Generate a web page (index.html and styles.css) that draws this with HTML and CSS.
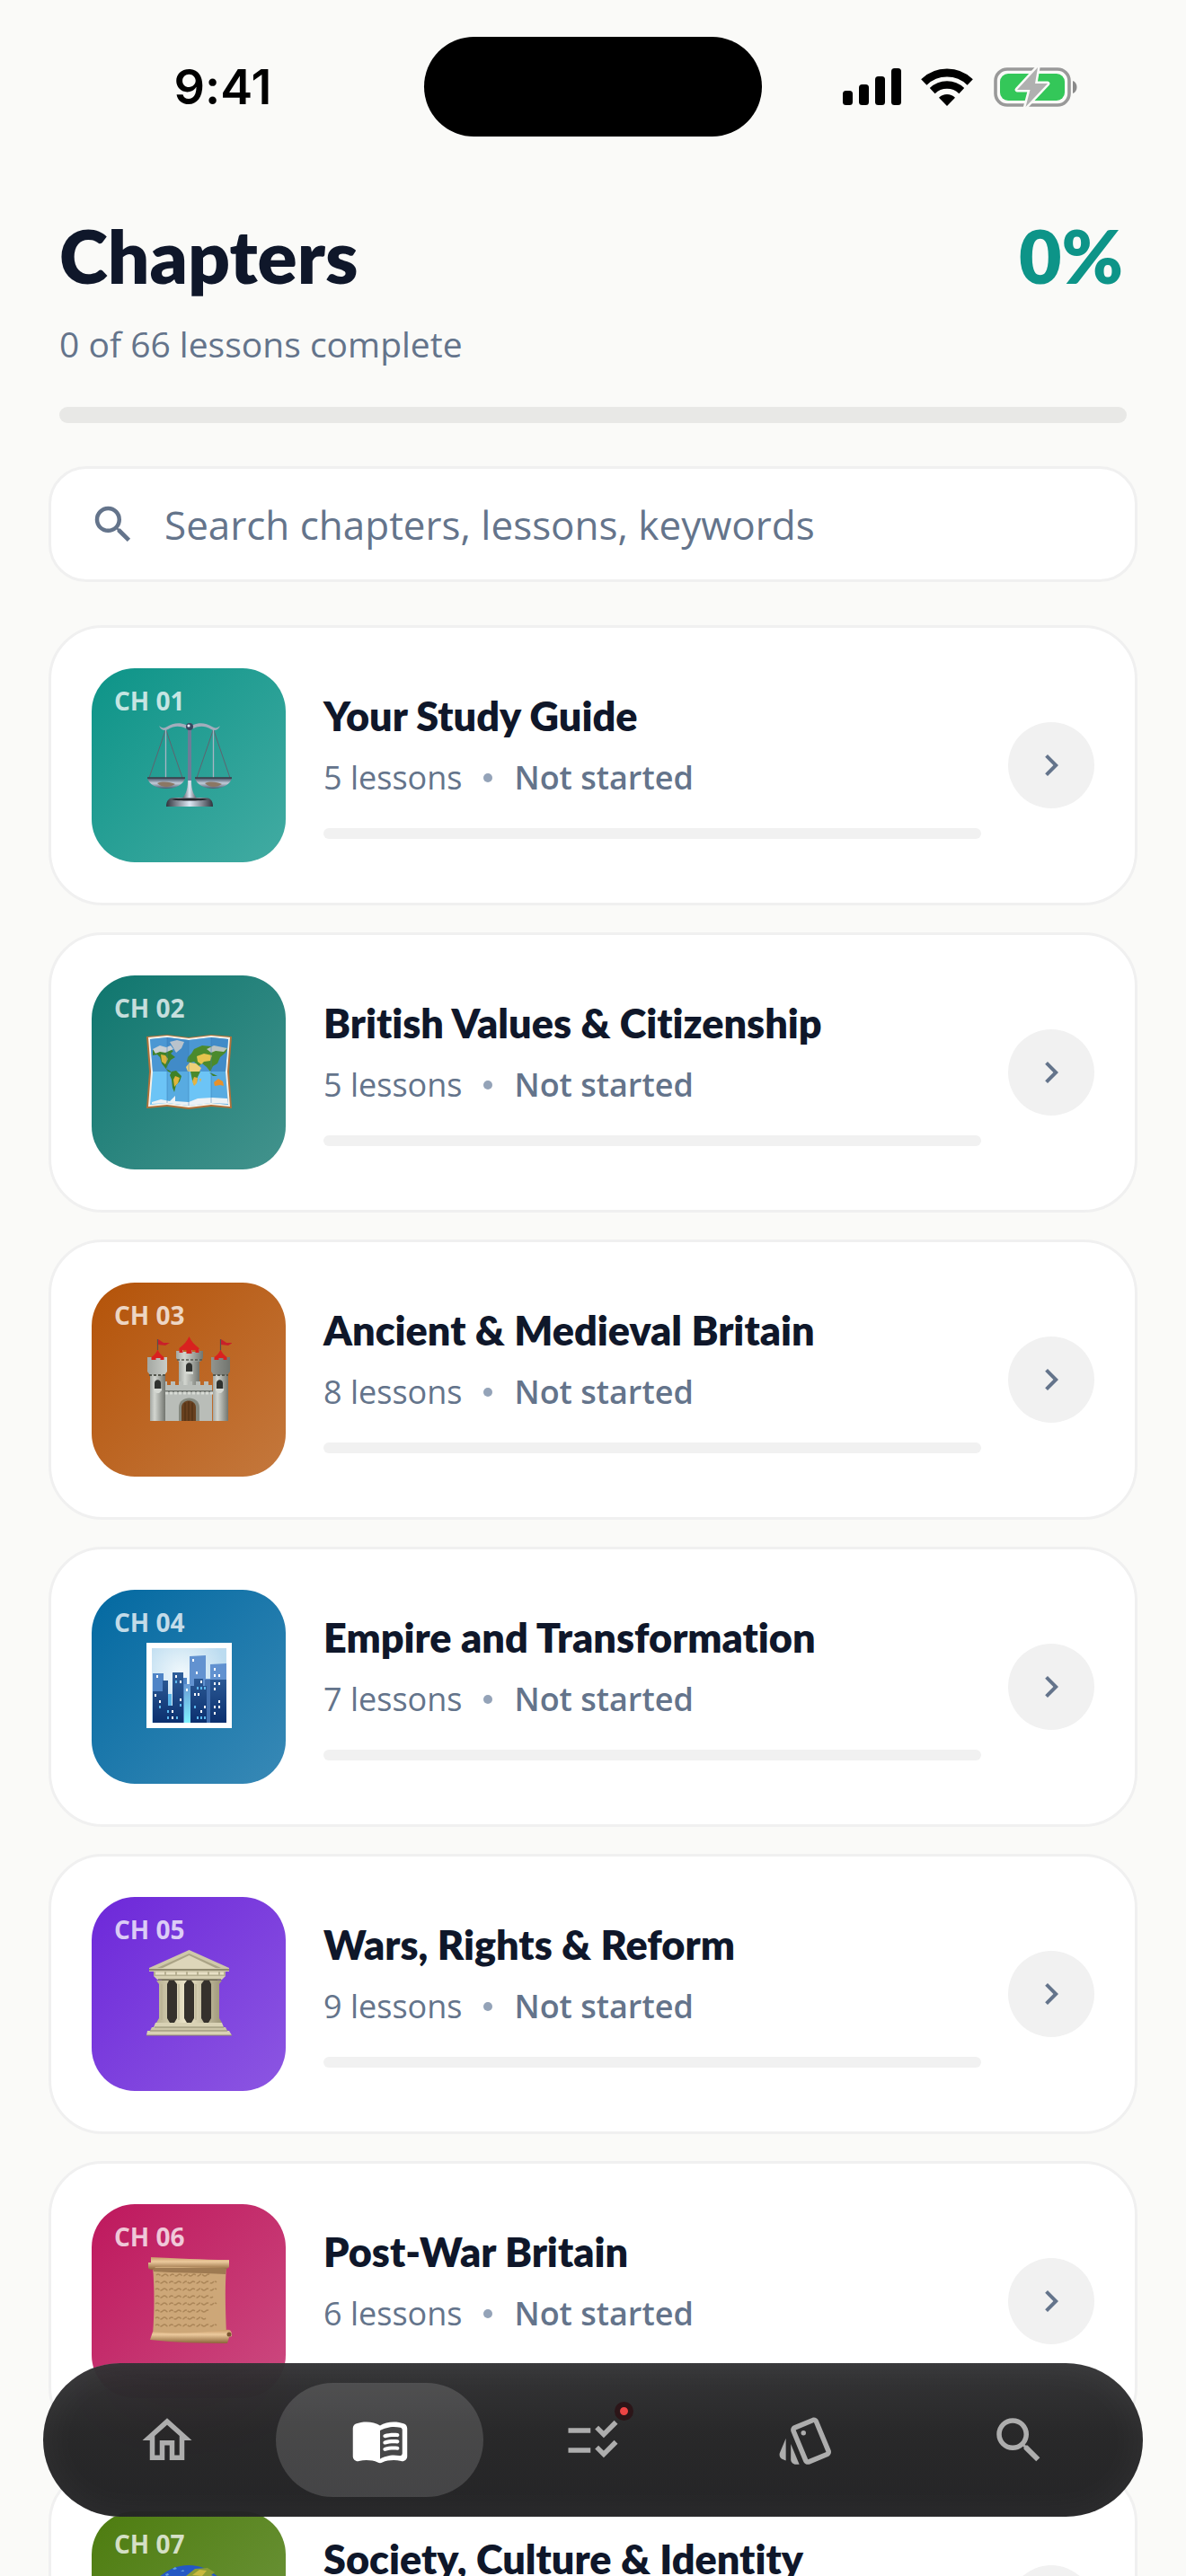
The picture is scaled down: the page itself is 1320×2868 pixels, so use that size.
FILE: index.html
```html
<!DOCTYPE html>
<html lang="en">
<head>
    <meta charset="UTF-8">
    <meta name="viewport" content="width=device-width, initial-scale=1.0">
    <title>Chapters</title>
    <link rel="stylesheet" href="styles.css">
</head>
<body>
    <div class="screen">
        <div class="status-bar">
            <span class="time">9:41</span>
            <span class="island"></span>
            <div class="status-icons">
                <svg width="65" height="42" viewBox="0 0 65 42">
                    <rect x="0" y="25" width="11" height="16" rx="3.5"/>
                    <rect x="18" y="18" width="11" height="23" rx="3.5"/>
                    <rect x="36" y="9" width="11" height="32" rx="3.5"/>
                    <rect x="54" y="0" width="11" height="41" rx="3.5"/>
                </svg>
                <svg width="58" height="44" viewBox="0 0 58 44">
                    <path d="M3.3 16.4a37 37 0 0 1 51.4 0" fill="none" stroke="#000" stroke-width="9"/>
                    <path d="M12.7 26.1a23.5 23.5 0 0 1 32.6 0" fill="none" stroke="#000" stroke-width="8.4"/>
                    <path d="M29 43l-9-9.3a13 13 0 0 1 18 0z"/>
                </svg>
                <svg width="95" height="50" viewBox="0 0 95 50">
                    <rect x="3" y="5" width="82" height="40" rx="13" fill="none" stroke="#999" stroke-width="3.6"/>
                    <path d="M89 18c6 2 6 12 0 14z" fill="#8a8a8a"/>
                    <rect x="8" y="10" width="72" height="30" rx="9" fill="#34c759"/>
                    <path d="M50 3L27 28h14.5l-5 19L61 21H47z" fill="#b0b0b0" stroke="#fafaf8" stroke-width="5" stroke-linejoin="round" paint-order="stroke"/>
                </svg>
            </div>
        </div>

        <header class="header">
            <div class="header-row">
                <h1>Chapters</h1>
                <span class="percent">0%</span>
            </div>
            <p class="subtitle">0 of 66 lessons complete</p>
            <div class="total-bar"></div>
        </header>

        <main class="content">
            <label class="search" for="search">
                <svg width="54" height="54" viewBox="0 0 24 24"><path d="M15.5 14h-.79l-.28-.27A6.471 6.471 0 0 0 16 9.5 6.5 6.5 0 1 0 9.5 16c1.61 0 3.09-.59 4.23-1.57l.27.28v.79l5 4.99L20.49 19l-4.99-5zm-6 0C7.01 14 5 11.99 5 9.5S7.01 5 9.5 5 14 7.01 14 9.5 11.99 14 9.5 14z"/></svg>
                <input type="text" id="search" placeholder="Search chapters, lessons, keywords" aria-label="Search">
            </label>

            <a class="card" href="#">
                <div class="tile tile-1">
                    <span class="tile-label">CH 01</span>
                    <!-- scales -->
                    <svg class="emoji" viewBox="0 0 96 96">
                        <defs>
                            <linearGradient id="steel" x1="0" x2="1">
                                <stop offset="0" stop-color="#30343d"/><stop offset=".5" stop-color="#dfe9f5"/><stop offset="1" stop-color="#30343d"/>
                            </linearGradient>
                            <linearGradient id="pan" x1="0" x2="0" y1="0" y2="1">
                                <stop offset="0" stop-color="#3e4c60"/><stop offset=".5" stop-color="#c2cdda"/><stop offset="1" stop-color="#4a586d"/>
                            </linearGradient>
                        </defs>
                        <path d="M22.5 9L4 63M22.5 9L41 63M75.5 9L57 63M75.5 9L94 63" stroke="#5d6470" stroke-width="1" fill="none"/>
                        <path d="M22.5 9v54M75.5 9v54" stroke="#a9b4c4" stroke-width="1.3"/>
                        <path d="M15 5c3 3 6 3 9 1 6-4 14-5 21-2h8c7-3 15-2 21 2 3 2 6 2 9-1-2 5-6 6-10 4-7-4-13-4-20-1h-8c-7-3-13-3-20 1-4 2-8 1-10-4z" fill="#a3adbc"/>
                        <rect x="47" y="7" width="4" height="74" fill="#6d7c98"/>
                        <circle cx="49" cy="6" r="4" fill="#39475f"/><circle cx="48" cy="5" r="1.6" fill="#e8f1ff"/>
                        <path d="M47 66h4c0 12 3 17 8 21H39c5-4 8-9 8-21z" fill="url(#steel)"/>
                        <path d="M23 95c0-7 3-10 10-10h32c7 0 10 3 10 10z" fill="url(#steel)"/>
                        <path d="M28 87c8-2 33-2 42 0-8 2-34 2-42 0z" fill="#25282e"/>
                        <path d="M2 63h42c-3 16-39 16-42 0zM55 63h41c-3 16-38 16-41 0z" fill="url(#pan)"/>
                        <path d="M2 63h42M55 63h41" stroke="#3b3f49" stroke-width="1.5"/>
                        <path d="M13 69c7-3 15-1 20 1-6 4-15 4-20-1zM66 69c7-3 14-1 19 1-6 4-14 4-19-1z" fill="#8b7764"/>
                    </svg>
                </div>
                <div class="card-text">
                    <h2>Your Study Guide</h2>
                    <p class="meta">5 lessons <i class="dot"></i> <b>Not started</b></p>
                    <div class="bar"></div>
                </div>
                <span class="arrow"><svg width="48" height="48" viewBox="0 0 24 24"><path d="M10 6L8.59 7.41 13.17 12l-4.58 4.59L10 18l6-6z"/></svg></span>
            </a>

            <a class="card" href="#">
                <div class="tile tile-2">
                    <span class="tile-label">CH 02</span>
                    <!-- world map -->
                    <svg class="emoji" viewBox="0 0 96 96">
                        <path d="M1 9l23-2 24 3 25-3 23 2-3 39 3 41-23-2-25 3-24-3-23 2 3-41z" fill="#b0713a"/>
                        <path d="M3 10l21-2 24 3 25-3 21 2-3 38 3 39-21-2-25 3-24-3-21 2 3-39z" fill="#f5f2ea"/>
                        <path d="M5 12l19-2 24 3 25-3 19 2-3 36 3 37-19-2-25 3-24-3-19 2 3-37z" fill="#6cc4f6"/>
                        <path d="M5 12l19-2 24 3 25-3 19 2-3 36H8z" fill="#4b97d3"/>
                        <path d="M24 10l24 3v73l-24-3zM73 10l19 2-3 36 3 37-19-2z" fill="#2a6fae" opacity=".3"/>
                        <path d="M8 24l10-2 8 1 5 2-3 3 5 4-5 3-3 5-2 5 4 2 3 3-5-2-7-9-2-7-3-3-5 1z" fill="#3f8128"/>
                        <path d="M17 29l5 1 3 4-3 6-4-3z" fill="#d8b33c"/>
                        <path d="M8 23l8-4 7 2 5-2 3 4-9 4-6-1-5 2z" fill="#c7cfd4"/>
                        <path d="M27 15l8-2 8 2-3 7-6 5-4-7z" fill="#b9c3cc"/>
                        <path d="M29 48l5-1 6 6-2 6-4 4-2 8-2-5-1-9-2-5z" fill="#3f8128"/>
                        <path d="M33 53l5 2-2 6-4 4-1-8z" fill="#e0b53c"/>
                        <path d="M47 32l4-4 3-5 9-4 10 1 18 2-2 5-6 5-3 7-5 3-3 6-4-5-5-4-4 3-5-5-4 1-4-1z" fill="#4b8a2c"/>
                        <path d="M57 31l8-3 9 2-2 6-7 1-3 3-4-3z" fill="#e5c44d"/>
                        <path d="M68 23l8-4 15 3-4 4-9-1-5 2z" fill="#bbc3c2"/>
                        <path d="M45 43l4-5 7 1 6 5-2 4h-13z" fill="#efd079"/>
                        <path d="M50 48h11l-3 6-1 6-3 3-2-5z" fill="#4b8a2c"/>
                        <path d="M54 54l4 1-1 6-3 3-2-5zM60 56h2l-1 4z" fill="#e2b344"/>
                        <path d="M76 60l5-4 5 3 1 5-4-1-6 1z" fill="#e8912a"/>
                        <path d="M71 49l5 2 4 2-5 0z" fill="#3f8128"/>
                        <path d="M7 82l10-3 10 2 6-6v6l15 1 10-4 16-1 17 1 1 6-19-1-25 3-24-3-17 1z" fill="#edf2f5"/>
                        <path d="M48 13v73M24 10v73M73 10v73" stroke="#3c7db5" stroke-width="1" opacity=".5"/>
                    </svg>
                </div>
                <div class="card-text">
                    <h2>British Values &amp; Citizenship</h2>
                    <p class="meta">5 lessons <i class="dot"></i> <b>Not started</b></p>
                    <div class="bar"></div>
                </div>
                <span class="arrow"><svg width="48" height="48" viewBox="0 0 24 24"><path d="M10 6L8.59 7.41 13.17 12l-4.58 4.59L10 18l6-6z"/></svg></span>
            </a>

            <a class="card" href="#">
                <div class="tile tile-3">
                    <span class="tile-label">CH 03</span>
                    <!-- castle -->
                    <svg class="emoji" viewBox="0 0 96 96">
                        <defs>
                            <linearGradient id="stone" x1="0" x2="1">
                                <stop offset="0" stop-color="#a3a7a2"/><stop offset=".3" stop-color="#d3d6d0"/><stop offset="1" stop-color="#72756f"/>
                            </linearGradient>
                        </defs>
                        <rect x="37" y="24" width="23" height="32" fill="url(#stone)"/>
                        <path d="M34 17h4v-2h4v3h4v-3h6v3h4v-3h4v2h4v8l-3 4H37l-3-4z" fill="url(#stone)"/>
                        <path d="M48.5 1c2 5 6 9 11 13v5h-4v-3h-4v4h-6v-4h-4v3h-4v-5c5-4 9-8 11-13z" fill="#d9211f"/>
                        <path d="M35 27h28" stroke="#55584f" stroke-width="1.5" stroke-dasharray="3 2"/>
                        <path d="M45 40v-6c0-5 7-5 7 0v6z" fill="#30322f"/><rect x="44" y="40" width="9" height="3" fill="#d5d8d2"/>
                        <path d="M21 51h3v4h4v-4h5v4h4v-4h5v4h5v-4h5v4h4v-4h5v4h4v-4h5v4h4v40H21z" fill="#b9bdb8"/>
                        <path d="M22 62h53" stroke="#5d605a" stroke-width="1.5"/><path d="M22 64h53" stroke="#d8dbd5" stroke-width="3" stroke-dasharray="3 2"/>
                        <path d="M37 95V80c0-14 23-14 23 0v15z" fill="#85897f"/>
                        <path d="M40 95V80c0-10 16-10 16 0v15z" fill="#68401f"/>
                        <path d="M44 75v20M48 73v22M52 75v20" stroke="#4b2c13" stroke-width="1"/>
                        <rect x="5" y="40" width="17" height="55" fill="url(#stone)"/>
                        <rect x="75" y="40" width="17" height="55" fill="url(#stone)"/>
                        <path d="M2 24h22v16l-3 4H5l-3-4zM73 24h21v16l-3 4H76l-3-4z" fill="url(#stone)"/>
                        <path d="M4 44h18M75 44h17" stroke="#55584f" stroke-width="2" stroke-dasharray="3 2"/>
                        <path d="M13.5 15c1 4 4 7 7 9v3h-4v-2h-5v2h-5v-3c3-2 6-5 7-9zM83.500 15c1 4 4 7 7 9v3h-4v-2h-5v2h-5v-3c3-2 6-5 7-9z" fill="#d9211f"/>
                        <path d="M13.5 4v12M83.5 4v12" stroke="#59504a" stroke-width="1.2"/>
                        <path d="M14 4l6 4 7 0-5 3-8-1zM84 4l6 4 7 0-5 3-8-1z" fill="#c9202a"/>
                        <path d="M10 59v-6c0-5 7-5 7 0v6zM79 59v-6c0-5 7-5 7 0v6z" fill="#30322f"/>
                        <path d="M9 59h9v2l-3 3h-3l-3-3zM78 59h9v2l-3 3h-3l-3-3z" fill="#d5d8d2"/>
                    </svg>
                </div>
                <div class="card-text">
                    <h2>Ancient &amp; Medieval Britain</h2>
                    <p class="meta">8 lessons <i class="dot"></i> <b>Not started</b></p>
                    <div class="bar"></div>
                </div>
                <span class="arrow"><svg width="48" height="48" viewBox="0 0 24 24"><path d="M10 6L8.59 7.41 13.17 12l-4.58 4.59L10 18l6-6z"/></svg></span>
            </a>

            <a class="card" href="#">
                <div class="tile tile-4">
                    <span class="tile-label">CH 04</span>
                    <!-- cityscape -->
                    <svg class="emoji" viewBox="0 0 96 96">
                        <defs>
                            <radialGradient id="sky" cx=".4" cy=".35" r=".6">
                                <stop offset="0" stop-color="#f2f9fc"/><stop offset="1" stop-color="#bcdcf0"/>
                            </radialGradient>
                            <linearGradient id="tower" x1="0" x2="0" y1="0" y2="1">
                                <stop offset="0" stop-color="#2f5f9a"/><stop offset="1" stop-color="#0b2f6e"/>
                            </linearGradient>
                            <linearGradient id="glow" x1="0" x2="0" y1="0" y2="1">
                                <stop offset="0" stop-color="#6a9ad4"/><stop offset="1" stop-color="#7ff2ff"/>
                            </linearGradient>
                        </defs>
                        <rect x="1" y="0" width="95" height="95" fill="#fff"/>
                        <rect x="7" y="6" width="83" height="83" fill="url(#sky)"/>
                        <path d="M49 15l18-1v26h5V24l18-1v30H49z" fill="#6292d0"/>
                        <path d="M8 34h12v8h5v20H8zM42 39h4v7h4v43h-8z" fill="#4f84c6"/>
                        <rect x="25" y="57" width="4" height="16" fill="#59b4e8"/>
                        <rect x="43" y="46" width="7" height="43" fill="url(#glow)"/>
                        <rect x="66" y="41" width="6" height="48" fill="#426fae"/>
                        <path d="M8 54h11V42h6v28h5V33h12v56H8zM50 48h4v-8h10v8h4v41H50zM72 41h18v48H72z" fill="url(#tower)"/>
                        <path d="M52 18h2v3h-2zM56 32h2v3h-2zM76 28h2v3h-2zM76 35h2v3h-2zM81 35h2v3h-2zM12 36h2v3h-2zM33 36h2v3h-2zM38 42h2v3h-2zM45 51h2v3h-2zM10 57h2v3h-2zM15 64h2v3h-2zM38 62h2v3h-2zM29 75h2v3h-2zM29 82h2v3h-2zM61 42h2v3h-2zM54 56h2v3h-2zM58 56h2v3h-2zM65 70h2v3h-2zM61 75h2v3h-2zM76 44h2v3h-2zM81 44h2v3h-2zM76 50h2v3h-2zM81 64h2v3h-2zM76 70h2v3h-2zM81 70h2v3h-2zM76 77h2v3h-2z" fill="#fff"/>
                        <path d="M33 42h2v3h-2zM15 70h2v3h-2zM38 68h2v3h-2zM24 75h2v3h-2zM24 82h2v3h-2zM34 82h2v3h-2zM57 49h2v3h-2zM61 49h2v3h-2zM65 49h2v3h-2zM54 70h2v3h-2zM57 82h2v3h-2zM61 82h2v3h-2zM65 82h2v3h-2z" fill="#5cb9ee"/>
                    </svg>
                </div>
                <div class="card-text">
                    <h2>Empire and Transformation</h2>
                    <p class="meta">7 lessons <i class="dot"></i> <b>Not started</b></p>
                    <div class="bar"></div>
                </div>
                <span class="arrow"><svg width="48" height="48" viewBox="0 0 24 24"><path d="M10 6L8.59 7.41 13.17 12l-4.58 4.59L10 18l6-6z"/></svg></span>
            </a>

            <a class="card" href="#">
                <div class="tile tile-5">
                    <span class="tile-label">CH 05</span>
                    <!-- classical building -->
                    <svg class="emoji" viewBox="0 0 96 96">
                        <defs>
                            <linearGradient id="marble" x1="0" x2="1">
                                <stop offset="0" stop-color="#b8b193"/><stop offset=".45" stop-color="#ece5c9"/><stop offset="1" stop-color="#9d9678"/>
                            </linearGradient>
                        </defs>
                        <rect x="18" y="33" width="62" height="50" fill="#35312c"/>
                        <path d="M48.5 0L93 20v4H4v-4z" fill="#cfc8aa"/>
                        <path d="M48.5 4L84 20H13z" fill="#aaa386"/>
                        <path d="M48.5 6L80 21H17z" fill="#ddd6ba"/>
                        <path d="M4 21h89v2H4z" fill="#8e886d"/>
                        <path d="M9 24h80v5H9z" fill="#b7b092"/>
                        <path d="M11 26h76" stroke="#e8e1c6" stroke-width="3" stroke-dasharray="10 2"/>
                        <path d="M9 29h80l-4 4H13z" fill="#d6cfb2"/>
                        <path d="M14 33h70" stroke="#7d775f" stroke-width="1.5"/>
                        <path d="M12 34h14l-2 4v38l3 5H12l3-5V38zM32 34h14l-3 4v38l3 5H32l3-5V38zM51 34h14l-3 4v38l3 5H51l3-5V38zM71 34h14l-3 4v38l3 5H70l3-5V38z" fill="url(#marble)"/>
                        <path d="M18 38v40M37 38v40M56 38v40M75 38v40" stroke="#b5ae90" stroke-width="1"/>
                        <path d="M11 81h74l2 5H9z" fill="#d9d2b5"/><path d="M7 86h82l2 4H5z" fill="#cdc6a8"/><path d="M2 90h91l3 5H1z" fill="#d9d2b5"/>
                        <path d="M10 86h77M5 90h86M1 95h95" stroke="#8e886d" stroke-width="1.2"/>
                    </svg>
                </div>
                <div class="card-text">
                    <h2>Wars, Rights &amp; Reform</h2>
                    <p class="meta">9 lessons <i class="dot"></i> <b>Not started</b></p>
                    <div class="bar"></div>
                </div>
                <span class="arrow"><svg width="48" height="48" viewBox="0 0 24 24"><path d="M10 6L8.59 7.41 13.17 12l-4.58 4.59L10 18l6-6z"/></svg></span>
            </a>

            <a class="card" href="#">
                <div class="tile tile-6">
                    <span class="tile-label">CH 06</span>
                    <!-- scroll -->
                    <svg class="emoji" viewBox="0 0 96 96">
                        <defs>
                            <linearGradient id="roll" x1="0" x2="0" y1="0" y2="1">
                                <stop offset="0" stop-color="#c79a68"/><stop offset=".35" stop-color="#ecca9d"/><stop offset="1" stop-color="#8b6238"/>
                            </linearGradient>
                        </defs>
                        <path d="M8 10h82c-2 25-1 50 0 76H8c2-26 2-51 0-76z" fill="#cda778"/>
                        <path d="M8 12h82l-1 7c-30-2-55-1-80-3z" fill="#7f5c38" opacity=".6"/>
                        <path d="M12 20q2-2 4 0t4 0 4 0 4 0 4 0 4 0 4 0 4 0 4 0 4 0 4 0 4 0 4 0 4 0 4 0M11 28q2-2 4 0t4 0 4 0 4 0 4 0 4 0 4 0 4 0 4 0 4 0 4 0 4 0 4 0 4 0 4 0 4 0 4 0M11 36q2-2 4 0t4 0 4 0 4 0 4 0 4 0 4 0 4 0 4 0 4 0 4 0 4 0 4 0 4 0 4 0 4 0 4 0M11 44q2-2 4 0t4 0 4 0 4 0 4 0 4 0 4 0 4 0 4 0 4 0 4 0 4 0 4 0 4 0 4 0 4 0M11 52q2-2 4 0t4 0 4 0 4 0 4 0 4 0 4 0 4 0 4 0 4 0 4 0 4 0 4 0 4 0 4 0 4 0 4 0M11 60q2-2 4 0t4 0 4 0 4 0 4 0 4 0 4 0 4 0 4 0 4 0 4 0 4 0 4 0 4 0 4 0M11 68q2-2 4 0t4 0 4 0 4 0 4 0 4 0 4 0 4 0 4 0 4 0 4 0 4 0 4 0 4 0M11 76q2-2 4 0t4 0 4 0 4 0 4 0 4 0 4 0 4 0 4 0 4 0 4 0 4 0 4 0 4 0 4 0 4 0 4 0" fill="none" stroke="#8e6a3e" stroke-width="1.5" stroke-dasharray="5 1 9 2" opacity=".55"/>
                        <path d="M6 0c30 1 55 3 87 3v8c-3 3-5 2-6 1-27 0-50-2-76-1-2 4-6 4-8 1V6h3z" fill="url(#roll)"/>
                        <path d="M8 83c27 3 55 1 82-2 4-1 6 1 6 7l-3 1-2 7c-30 0-58-1-86-4z" fill="url(#roll)"/>
                        <circle cx="93" cy="86" r="2.5" fill="#7a5530"/>
                    </svg>
                </div>
                <div class="card-text">
                    <h2>Post-War Britain</h2>
                    <p class="meta">6 lessons <i class="dot"></i> <b>Not started</b></p>
                    <div class="bar"></div>
                </div>
                <span class="arrow"><svg width="48" height="48" viewBox="0 0 24 24"><path d="M10 6L8.59 7.41 13.17 12l-4.58 4.59L10 18l6-6z"/></svg></span>
            </a>

            <a class="card" href="#">
                <div class="tile tile-7">
                    <span class="tile-label">CH 07</span>
                    <!-- globe -->
                    <svg class="emoji" viewBox="0 0 96 96">
                        <circle cx="48" cy="49" r="48" fill="#2458c4"/>
                        <path d="M45 13l10-8 14-1 8 5-4 3 8 3 8 10-8 22-20 6-12-10-10-6z" fill="#8a9c33"/>
                        <path d="M52 12l8-6 8 1-5 6z" fill="#c9b93f"/>
                        <path d="M30 5l3-2 2 2-3 1zM22 11l3-1 1 2-3 1zM39 8l3-2 1 2z" fill="#63a0dc"/>
                    </svg>
                </div>
                <div class="card-text">
                    <h2>Society, Culture &amp; Identity</h2>
                    <p class="meta">8 lessons <i class="dot"></i> <b>Not started</b></p>
                    <div class="bar"></div>
                </div>
                <span class="arrow"><svg width="48" height="48" viewBox="0 0 24 24"><path d="M10 6L8.59 7.41 13.17 12l-4.58 4.59L10 18l6-6z"/></svg></span>
            </a>
        </main>

        <nav class="tabs">
            <button type="button" aria-label="Home">
                <svg viewBox="0 0 24 24"><path d="M12 5.69L17 10.19V18H15V12H9V18H7V10.19L12 5.69M12 3L2 12H5V20H11V14H13V20H19V12H22L12 3Z"/></svg>
            </button>
            <button type="button" class="active" aria-label="Chapters">
                <svg viewBox="0 0 24 24"><path d="M17.5 4.5c-1.95 0-4.05.4-5.5 1.5-1.45-1.1-3.55-1.5-5.5-1.5-1.45 0-2.99.22-4.28.79C1.49 5.62 1 6.33 1 7.14v11.28c0 1.3 1.22 2.26 2.48 1.94.98-.25 2.02-.36 3.02-.36 1.56 0 3.22.26 4.56.92.6.3 1.28.3 1.87 0 1.34-.67 3-.92 4.56-.92 1 0 2.04.11 3.02.36 1.26.33 2.48-.63 2.48-1.94V7.14c0-.81-.49-1.52-1.22-1.85-1.28-.57-2.82-.79-4.27-.79zM21 17.23c0 .63-.58 1.09-1.2.98-.75-.14-1.53-.2-2.3-.2-1.7 0-4.15.65-5.5 1.5V8c1.35-.85 3.8-1.5 5.5-1.5.92 0 1.83.09 2.7.28.46.1.8.51.8.98v9.47z"/><path id="line" d="M13.98 11.01c-.32 0-.61-.2-.71-.52-.13-.39.09-.82.48-.94 1.54-.5 3.53-.66 5.36-.45.41.05.71.42.66.83-.05.41-.42.71-.83.66-1.62-.19-3.39-.04-4.73.39-.08.01-.16.03-.23.03z"/><use href="#line" y="2.66"/><use href="#line" y="5.32"/></svg>
            </button>
            <button type="button" aria-label="Practice">
                <svg viewBox="0 0 24 24"><path d="M11 7H2v2h9V7zM11 15H2v2h9v-2zM16.34 11l-3.54-3.54 1.41-1.41 2.12 2.12 4.24-4.24L22 5.34 16.34 11zM16.34 19l-3.54-3.54 1.41-1.41 2.12 2.12 4.24-4.24L22 13.34 16.34 19z"/></svg>
                <span class="badge"></span>
            </button>
            <button type="button" aria-label="Flashcards">
                <svg viewBox="0 0 24 24"><path d="M2.53 19.65l1.34.56v-9.03l-2.43 5.86c-.41 1.02.08 2.19 1.09 2.61zm19.5-3.7L17.07 3.98c-.31-.75-1.04-1.21-1.81-1.23-.26 0-.53.04-.79.15L7.1 5.95c-.75.31-1.21 1.03-1.23 1.8-.01.27.04.54.15.8l4.96 11.97c.31.76 1.05 1.22 1.83 1.23.26 0 .52-.05.77-.15l7.36-3.05c1.02-.42 1.51-1.59 1.09-2.6zm-9.2 3.8L7.87 7.79l7.35-3.04h.01l4.95 11.95-7.35 3.05z"/><circle cx="11" cy="9" r="1"/><path d="M5.88 19.75c0 1.1.9 2 2 2h1.45l-3.45-8.34v6.34z"/></svg>
            </button>
            <button type="button" aria-label="Search">
                <svg viewBox="0 0 24 24"><path d="M15.5 14h-.79l-.28-.27A6.471 6.471 0 0 0 16 9.5 6.5 6.5 0 1 0 9.5 16c1.61 0 3.09-.59 4.23-1.57l.27.28v.79l5 4.99L20.49 19l-4.99-5zm-6 0C7.01 14 5 11.99 5 9.5S7.01 5 9.5 5 14 7.01 14 9.5 11.99 14 9.5 14z"/></svg>
            </button>
        </nav>
    </div>
</body>
</html>
```
FILE: styles.css
```css
* {
    box-sizing: border-box;
}

body {
    margin: 0;
    background-color: #fafaf8;
    color: #0f172a;
    font-family: "Open Sans", sans-serif;
    font-variant-ligatures: none;
}

h1, h2, p {
    margin: 0;
}

.screen {
    height: 100vh;
    overflow: hidden;
}

/* status bar */
.status-bar {
    display: grid;
    grid-template-columns: 1fr 376px 1fr;
    align-items: center;
    padding-top: 41px;
}

.time {
    padding-left: 24px;
    color: #000;
    font-family: Inter, sans-serif;
    font-size: 54px;
    font-weight: 600;
    line-height: 64px;
    text-align: center;
}

.island {
    height: 111px;
    border-radius: 56px;
    background-color: #000;
}

.status-icons {
    display: flex;
    align-items: center;
    justify-content: center;
    gap: 22px;
    padding-right: 30px;
}

/* header */
.header {
    padding: 84px 66px 0;
}

.header-row {
    display: flex;
    justify-content: space-between;
    font-family: Lato, sans-serif;
    font-size: 82px;
    font-weight: 800;
    line-height: 96px;
}

h1 {
    font-size: 82px;
    font-weight: 800;
}

.percent {
    padding-right: 4px;
    color: #0d9488;
}

.subtitle {
    margin-top: 24px;
    color: #64748b;
    font-size: 39px;
    line-height: 54px;
}

.total-bar {
    height: 18px;
    margin-top: 43px;
    border-radius: 9px;
    background-color: #e8e8e6;
}

/* search and chapter list */
.content {
    display: flex;
    flex-direction: column;
    gap: 30px;
    padding: 48px 54px;
}

.search {
    display: flex;
    align-items: center;
    gap: 30px;
    height: 129px;
    margin-bottom: 18px;
    padding: 0 42px;
    border: 3px solid #f0f0f0;
    border-radius: 42px;
    background-color: #fff;
}

.search svg, .arrow svg {
    flex: none;
    fill: #64748b;
}

.search input {
    flex: 1;
    min-width: 0;
    padding: 0;
    border: none;
    outline: none;
    background: none;
    color: #0f172a;
    font-family: inherit;
    font-size: 44px;
}

.search input::placeholder {
    color: #64748b;
    opacity: 1;
}

.card {
    display: flex;
    align-items: center;
    padding: 45px;
    border: 3px solid #f0f0f0;
    border-radius: 60px;
    background-color: #fff;
    color: inherit;
    text-decoration: none;
}

.tile {
    display: flex;
    flex: none;
    flex-direction: column;
    gap: 5px;
    width: 216px;
    height: 216px;
    padding-top: 18px;
    border-radius: 48px;
}

.tile-1 { background: linear-gradient(135deg, #0d9488, #42aba2); }
.tile-2 { background: linear-gradient(135deg, #0f766e, #43938d); }
.tile-3 { background: linear-gradient(135deg, #b45309, #c4783d); }
.tile-4 { background: linear-gradient(135deg, #0369a1, #3889b6); }
.tile-5 { background: linear-gradient(135deg, #6d28d9, #8c56e2); }
.tile-6 { background: linear-gradient(135deg, #be185d, #cc4a80); }
.tile-7 { background: linear-gradient(135deg, #4d7c0f, #739843); }

.tile-label {
    padding-left: 25px;
    color: rgba(255, 255, 255, 0.75);
    font-size: 28px;
    font-weight: 700;
    line-height: 36px;
}

.emoji {
    align-self: center;
    width: 96px;
    height: 96px;
}

.card-text {
    flex: 1;
    min-width: 0;
    padding: 0 30px 0 42px;
}

.card-text h2 {
    font-family: Lato, sans-serif;
    font-size: 45px;
    font-weight: 800;
    line-height: 54px;
}

.meta {
    display: flex;
    align-items: center;
    gap: 24px;
    margin-top: 18px;
    color: #64748b;
    font-size: 36px;
    line-height: 48px;
}

.meta b {
    font-weight: 600;
}

.dot {
    width: 10px;
    height: 10px;
    border-radius: 50%;
    background-color: #94a3b8;
}

.bar {
    height: 12px;
    margin-top: 32px;
    border-radius: 6px;
    background-color: #f1f1f1;
}

.arrow {
    display: flex;
    flex: none;
    align-items: center;
    justify-content: center;
    width: 96px;
    height: 96px;
    border-radius: 50%;
    background-color: #f1f1f1;
}

/* bottom tabs */
.tabs {
    position: fixed;
    right: 48px;
    bottom: 66px;
    left: 48px;
    display: flex;
    gap: 6px;
    padding: 22px;
    border-radius: 86px;
    background: linear-gradient(rgba(42, 42, 44, 0.95), rgba(29, 29, 30, 0.95) 45%, rgba(25, 25, 27, 0.95));
    box-shadow: inset 0 0 48px rgba(255, 255, 255, 0.05);
    backdrop-filter: blur(45px);
}

.tabs button {
    position: relative;
    display: flex;
    flex: 1;
    align-items: center;
    justify-content: center;
    height: 127px;
    padding: 0;
    border: none;
    border-radius: 64px;
    background: none;
    cursor: pointer;
}

.tabs svg {
    width: 66px;
    height: 66px;
    fill: #adadad;
}

.tabs .active {
    background-color: rgba(255, 255, 255, 0.14);
}

.tabs .active svg {
    fill: #fff;
}

.badge {
    position: absolute;
    top: 21px;
    left: calc(50% + 24px);
    width: 21px;
    height: 21px;
    border: 6px solid #2c1518;
    border-radius: 50%;
    background-color: #ef4444;
}
```
